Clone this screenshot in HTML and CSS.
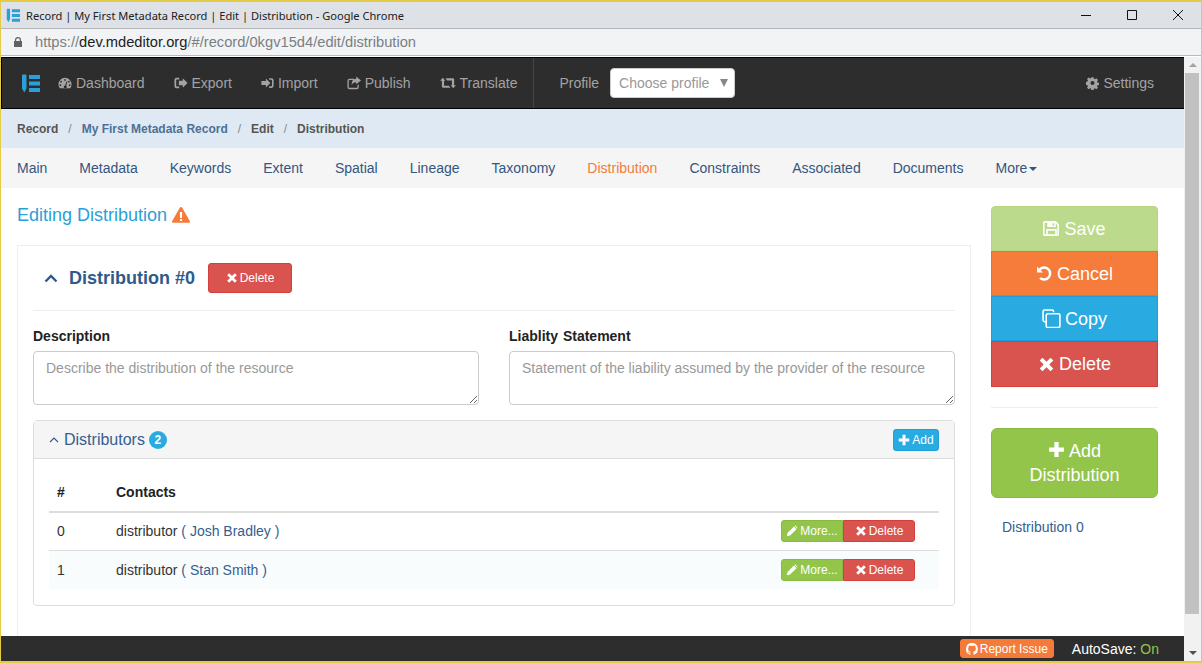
FILE: index.html
```html
<!DOCTYPE html>
<html lang="en">
<head>
  <meta charset="UTF-8" />
  <title>Record | My First Metadata Record | Edit | Distribution</title>
  <link rel="stylesheet" href="styles.css">
</head>
<body>
  <svg class="defs" width="0" height="0">
    <symbol id="i-logo" viewBox="0 0 19 19">
      <path d="M1 1.500A1 1 0 0 1 2 .5h2.500a1 1 0 0 1 1 1V14.500L3.250 18.500 1 14.500z" fill="#2b9fd8"/>
      <path d="M8 1h11v4H8zM8 7.500h11v4H8zM8 14h11v4H8z" fill="#2b9fd8"/>
    </symbol>
    <symbol id="i-x" viewBox="0 0 16 16">
      <path d="M4.2 1.600 8 5.400l3.800-3.800 2.600 2.600L10.600 8l3.800 3.800-2.600 2.600L8 10.600l-3.800 3.800-2.600-2.600L5.400 8 1.600 4.200z" fill="currentColor"/>
    </symbol>
    <symbol id="i-plus" viewBox="0 0 16 16">
      <path d="M6 1h4v5h5v4h-5v5H6v-5H1V6h5z" fill="currentColor"/>
    </symbol>
    <symbol id="i-pencil" viewBox="0 0 16 16">
      <path d="M1 15l1-4.500L10.500 2 14 5.500 5.500 14zM11.500 1l1-.3 2.800 2.800-.3 1L14.800 4.700 11.300 1.200z" fill="currentColor"/>
    </symbol>
    <symbol id="i-gauge" viewBox="0 0 16 16">
      <path fill-rule="evenodd" d="M8 2a7.500 7.500 0 0 0-7.500 7.500c0 1.700.5 3.200 1.500 4.500h12c1-1.300 1.500-2.800 1.500-4.500A7.500 7.500 0 0 0 8 2zM8 3.500a1 1 0 1 1 0 2 1 1 0 0 1 0-2zM3.500 5.500a1 1 0 1 1 0 2 1 1 0 0 1 0-2zM12.500 5.500a1 1 0 1 1 0 2 1 1 0 0 1 0-2zM2.700 9.500a1 1 0 1 1 0 2 1 1 0 0 1 0-2zM13.300 9.500a1 1 0 1 1 0 2 1 1 0 0 1 0-2zM10 6l.8.400-1.500 4.800a1.700 1.700 0 1 1-1.300-.3z" fill="currentColor"/>
    </symbol>
    <symbol id="i-export" viewBox="0 0 16 16">
      <path d="M6 2H3a2.500 2.500 0 0 0-2.500 2.500v7A2.500 2.500 0 0 0 3 14h3v-2H3a.5.5 0 0 1-.5-.5v-7A.5.5 0 0 1 3 4h3zM10 2.500 15.500 8 10 13.500V10.500H5.500v-5H10z" fill="currentColor"/>
    </symbol>
    <symbol id="i-import" viewBox="0 0 16 16">
      <path d="M10 2h3a2.500 2.500 0 0 1 2.500 2.500v7A2.500 2.500 0 0 1 13 14h-3v-2h3a.5.5 0 0 0 .5-.5v-7A.5.5 0 0 0 13 4h-3zM6 2.500 11.500 8 6 13.500V10.500H.5v-5H6z" fill="currentColor"/>
    </symbol>
    <symbol id="i-share" viewBox="0 0 16 16">
      <path d="M3 3h5v1.500H3a1 1 0 0 0-1 1v7a1 1 0 0 0 1 1h8a1 1 0 0 0 1-1V10h1.500v2.500A2.500 2.500 0 0 1 11 15H3a2.500 2.500 0 0 1-2.500-2.500v-7A2.500 2.500 0 0 1 3 3zM10.500 0.500 16 5l-5.500 4.500V7C7.500 7 6 8 5.500 10.500 5 6 7 3.200 10.500 3z" fill="currentColor"/>
    </symbol>
    <symbol id="i-retweet" viewBox="0 0 18 16">
      <path d="M0 5.500 3 2l3 3.500H4.500V11H10l1.800 2.500H3.500a1.500 1.500 0 0 1-1.500-1.500V5.500zM18 10.500 15 14l-3-3.500h1.500V5H8L6.200 2.500h8.300A1.500 1.500 0 0 1 16 4v6.500z" fill="currentColor"/>
    </symbol>
    <symbol id="i-cog" viewBox="0 0 16 16">
      <path fill-rule="evenodd" d="M6.700.8h2.600l.4 2 1.300.6 1.800-1.100 1.900 1.900-1.100 1.800.6 1.300 2 .4v2.600l-2 .4-.6 1.300 1.100 1.800-1.900 1.900-1.800-1.100-1.300.6-.4 2H6.700l-.4-2-1.300-.6-1.800 1.100-1.900-1.900 1.100-1.800-.6-1.300-2-.4V6.700l2-.4.600-1.300-1.100-1.800 1.900-1.900 1.800 1.100 1.300-.6zM8 5.500a2.500 2.500 0 1 0 0 5 2.500 2.500 0 0 0 0-5z" fill="currentColor"/>
    </symbol>
    <symbol id="i-save" viewBox="0 0 16 16">
      <path fill-rule="evenodd" d="M1.500 1H12l3 3v9.500a1.500 1.500 0 0 1-1.500 1.500h-12A1.500 1.500 0 0 1 0 13.500v-11A1.500 1.500 0 0 1 1.500 1zM1.500 2.500v11H3V8.500h10v5h.5V4.600L12 3v3.500H4V2.500zM4.500 10v3.500h7V10zM9 3v2.500h1.500V3z" fill="currentColor"/>
    </symbol>
    <symbol id="i-undo" viewBox="0 0 16 16">
      <path d="M1 1.500v5.500h5.500L4.400 4.900A4.500 4.500 0 1 1 4.700 11.500L3 13a6.800 6.800 0 1 0-.2-9.700z" fill="currentColor"/>
    </symbol>
    <symbol id="i-copy" viewBox="0 0 18 18">
      <path d="M11 3V2.500A1.500 1.500 0 0 0 9.500 1h-7A1.500 1.500 0 0 0 1 2.500v8A1.500 1.500 0 0 0 2.500 12H4M5.500 4.500h10A1.500 1.500 0 0 1 17 6v10a1.500 1.500 0 0 1-1.500 1.500h-10A1.500 1.500 0 0 1 4 16V6a1.500 1.500 0 0 1 1.500-1.500z" fill="none" stroke="currentColor" stroke-width="1.500"/>
    </symbol>
    <symbol id="i-github" viewBox="0 0 16 16">
      <path d="M8 0a8 8 0 0 0-2.500 15.600c.4.100.5-.2.500-.4v-1.400c-2.200.5-2.700-1-2.700-1-.4-.9-.9-1.200-.9-1.200-.7-.5.100-.5.100-.5.800.1 1.200.8 1.200.8.700 1.200 1.900.9 2.300.7.100-.5.300-.9.500-1.100-1.800-.2-3.600-.9-3.600-4 0-.9.300-1.600.8-2.100-.1-.2-.4-1 .1-2.100 0 0 .7-.2 2.200.8a7.600 7.600 0 0 1 4 0c1.500-1 2.200-.8 2.200-.8.400 1.100.2 1.900.1 2.100.5.600.8 1.300.8 2.100 0 3.100-1.900 3.700-3.700 3.900.3.300.6.800.6 1.500v2.200c0 .2.100.5.600.4A8 8 0 0 0 8 0z" fill="currentColor"/>
    </symbol>
  </svg>

  <div class="window">
    <div class="titlebar">
      <div class="title-left">
        <svg class="favicon"><use href="#i-logo"/></svg>
        <span>Record | My First Metadata Record | Edit | Distribution - Google Chrome</span>
      </div>
      <div class="win-btns">
        <span class="win-btn"><svg width="10" height="10"><path d="M0 5.500h10" stroke="#111" /></svg></span>
        <span class="win-btn"><svg width="10" height="10"><path d="M.5.500h9v9h-9z" stroke="#111" fill="none"/></svg></span>
        <span class="win-btn"><svg width="10" height="10"><path d="M0 0l10 10M10 0L0 10" stroke="#111"/></svg></span>
      </div>
    </div>
    <div class="addressbar">
      <svg class="lock" width="8" height="10" viewBox="0 0 8 10"><path fill-rule="evenodd" d="M1 4V3a3 3 0 0 1 6 0v1h1v6H0V4zM2.200 4h3.600V3a1.800 1.800 0 0 0-3.600 0z" fill="#5f6368"/></svg>
      <span class="url"><span class="url-scheme">https://</span><span class="url-host">dev.mdeditor.org</span>/#/record/0kgv15d4/edit/distribution</span>
    </div>

    <div class="viewport">
      <div class="page">
        <nav class="navbar">
          <svg class="brand"><use href="#i-logo"/></svg>
          <a class="nav-item"><svg class="ico"><use href="#i-gauge"/></svg>Dashboard</a>
          <a class="nav-item"><svg class="ico"><use href="#i-export"/></svg>Export</a>
          <a class="nav-item"><svg class="ico ico-narrow"><use href="#i-import"/></svg>Import</a>
          <a class="nav-item"><svg class="ico"><use href="#i-share"/></svg>Publish</a>
          <a class="nav-item"><svg class="ico ico-wide"><use href="#i-retweet"/></svg>Translate</a>
          <div class="nav-divider"></div>
          <span class="profile-label">Profile</span>
          <div class="profile-select"><span>Choose profile</span><span class="caret-down"></span></div>
          <a class="nav-item nav-settings"><svg class="ico ico-narrow"><use href="#i-cog"/></svg>Settings</a>
        </nav>

        <div class="breadcrumb">
          <span>Record</span><span class="sep">/</span>
          <a>My First Metadata Record</a><span class="sep">/</span>
          <span>Edit</span><span class="sep">/</span>
          <span>Distribution</span>
        </div>

        <div class="tabs">
          <a>Main</a>
          <a>Metadata</a>
          <a>Keywords</a>
          <a>Extent</a>
          <a>Spatial</a>
          <a>Lineage</a>
          <a>Taxonomy</a>
          <a class="active">Distribution</a>
          <a>Constraints</a>
          <a>Associated</a>
          <a>Documents</a>
          <a>More<span class="caret-small"></span></a>
        </div>

        <div class="content">
          <main class="main-col">
            <h3 class="page-title">Editing Distribution
              <svg class="warn" width="18" height="16" viewBox="0 0 18 16"><path fill-rule="evenodd" d="M9 0c.5 0 .9.300 1.100.600l7.700 13.500c.4.800-.1 1.700-1 1.700H1.200c-.9 0-1.400-.9-1-1.700L7.900.600C8.100.300 8.500 0 9 0zM7.800 5l.2 6h2l.2-6zM7.900 12v2h2.200v-2z" fill="#f47b3a"/></svg>
            </h3>

            <section class="card">
              <div class="card-head">
                <svg class="chev" width="14" height="9" viewBox="0 0 14 9"><path d="M1.500 7.500 7 2l5.500 5.500" fill="none" stroke="#2f5a8a" stroke-width="2.400"/></svg>
                <h4>Distribution #0</h4>
                <button class="btn btn-red btn-head"><svg class="ico-s"><use href="#i-x"/></svg>Delete</button>
              </div>

              <div class="fields">
                <div class="field">
                  <label>Description</label>
                  <textarea placeholder="Describe the distribution of the resource"></textarea>
                </div>
                <div class="field">
                  <label>Liablity Statement</label>
                  <textarea placeholder="Statement of the liability assumed by the provider of the resource"></textarea>
                </div>
              </div>

              <div class="panel">
                <div class="panel-head">
                  <div class="panel-title">
                    <svg width="10" height="6" viewBox="0 0 10 6"><path d="M1 5l4-4 4 4" fill="none" stroke="#2f5a8a" stroke-width="1.100"/></svg>
                    <span>Distributors</span>
                    <span class="badge">2</span>
                  </div>
                  <button class="btn btn-blue btn-add"><svg class="ico-s"><use href="#i-plus"/></svg>Add</button>
                </div>
                <div class="panel-body">
                  <table class="grid">
                    <thead>
                      <tr><th class="col-num">#</th><th>Contacts</th><th></th></tr>
                    </thead>
                    <tbody>
                      <tr>
                        <td>0</td>
                        <td>distributor <a>( Josh Bradley )</a></td>
                        <td class="col-act">
                          <div class="btn-group">
                            <button class="btn btn-green"><svg class="ico-s"><use href="#i-pencil"/></svg>More...</button>
                            <button class="btn btn-red"><svg class="ico-s"><use href="#i-x"/></svg>Delete</button>
                          </div>
                        </td>
                      </tr>
                      <tr class="odd">
                        <td>1</td>
                        <td>distributor <a>( Stan Smith )</a></td>
                        <td class="col-act">
                          <div class="btn-group">
                            <button class="btn btn-green"><svg class="ico-s"><use href="#i-pencil"/></svg>More...</button>
                            <button class="btn btn-red"><svg class="ico-s"><use href="#i-x"/></svg>Delete</button>
                          </div>
                        </td>
                      </tr>
                    </tbody>
                  </table>
                </div>
              </div>
            </section>
          </main>

          <aside class="side-col">
            <div class="side-stack">
              <button class="side-btn side-save"><svg class="ico-l"><use href="#i-save"/></svg>Save</button>
              <button class="side-btn side-cancel"><svg class="ico-l"><use href="#i-undo"/></svg>Cancel</button>
              <button class="side-btn side-copy"><svg class="ico-l ico-copy"><use href="#i-copy"/></svg>Copy</button>
              <button class="side-btn side-delete"><svg class="ico-l"><use href="#i-x"/></svg>Delete</button>
            </div>
            <hr class="side-rule" />
            <button class="side-add"><svg class="ico-l"><use href="#i-plus"/></svg>Add<br />Distribution</button>
            <a class="side-link">Distribution 0</a>
          </aside>
        </div>

        <footer class="statusbar">
          <button class="btn btn-orange"><svg class="ico-s"><use href="#i-github"/></svg>Report Issue</button>
          <span class="autosave">AutoSave: <b>On</b></span>
        </footer>
      </div>

      <div class="scrollbar">
        <span class="arrow-up"></span>
        <div class="scroll-track"><div class="scroll-thumb"></div></div>
        <span class="arrow-down"></span>
      </div>
    </div>
  </div>
</body>
</html>
```

FILE: styles.css
```css
* {
  box-sizing: border-box;
}
html, body {
  margin: 0;
  height: 663px;
  overflow: hidden;
}
body {
  font-family: "Liberation Sans", Arial, sans-serif;
  font-size: 14px;
  color: #333;
}
a {
  color: inherit;
  text-decoration: none;
}
.defs {
  display: block;
  height: 0;
}

/* browser chrome */
.window {
  display: flex;
  flex-direction: column;
  width: 1202px;
  height: 663px;
  border: solid #e3cb45;
  border-width: 2px 1px 2px 1px;
  background: #fff;
}
.titlebar {
  display: flex;
  justify-content: space-between;
  align-items: center;
  flex: none;
  height: 27px;
  padding-left: 5px;
  background: #dee1e6;
  border-bottom: 1px solid #b4b6ba;
  font-family: "Noto Sans", sans-serif;
  font-size: 11.1px;
  color: #222;
}
.title-left {
  display: flex;
  align-items: center;
  gap: 6px;
}
.favicon {
  width: 14px;
  height: 15px;
}
.win-btns {
  display: flex;
}
.win-btn {
  display: flex;
  align-items: center;
  justify-content: center;
  width: 46px;
  height: 26px;
}
.win-btn svg {
  display: block;
}
.addressbar {
  display: flex;
  align-items: center;
  flex: none;
  height: 27px;
  padding-left: 13px;
  gap: 13px;
  background: #f1f3f4;
  border-bottom: 1px solid #b8b9ba;
  font-size: 14.7px;
  color: #7b7f85;
}
.url-scheme {
  color: #7a7f85;
}
.url-host {
  color: #202124;
}
.viewport {
  display: flex;
  flex: 1;
  min-height: 0;
  border-top: 1px solid #fff;
}
.page {
  display: flex;
  flex-direction: column;
  flex: none;
  width: 1183px;
  min-height: 0;
}

/* scrollbar */
.scrollbar {
  display: flex;
  flex-direction: column;
  align-items: center;
  flex: 1;
  background: #f1f1f1;
}
.arrow-up, .arrow-down {
  flex: none;
  width: 0;
  height: 0;
  margin: 6px 0;
  border-left: 4px solid transparent;
  border-right: 4px solid transparent;
}
.arrow-up {
  border-bottom: 4px solid #a3a3a3;
}
.arrow-down {
  border-top: 4px solid #505050;
}
.scroll-track {
  flex: 1;
  width: 100%;
  padding-right: 1px;
}
.scroll-thumb {
  width: 14px;
  height: 541px;
  margin-left: 1px;
  background: #c1c1c1;
}

/* navbar */
.navbar {
  display: flex;
  align-items: center;
  flex: none;
  height: 52px;
  padding-left: 19px;
  background: #2d2d2d;
  border-top: 1px solid #000;
  border-bottom: 1px solid #000;
  border-left: 1px solid #000;
  color: #a3a3a3;
}
.brand {
  width: 19px;
  height: 19px;
  margin-right: 18px;
}
.nav-item {
  display: flex;
  align-items: center;
  gap: 4px;
  margin-right: 29px;
}
.ico {
  width: 14px;
  height: 14px;
}
.ico-narrow {
  width: 13px;
}
.ico-wide {
  width: 16px;
}
.nav-divider {
  align-self: stretch;
  width: 1px;
  margin-left: -13px;
  margin-right: 25px;
  background: #444;
}
.profile-label {
  margin-right: 11px;
}
.profile-select {
  display: flex;
  justify-content: space-between;
  align-items: center;
  width: 125px;
  height: 30px;
  padding: 0 6px 0 8px;
  background: #fff;
  border: 1px solid #ccc;
  border-radius: 4px;
  color: #999;
}
.caret-down {
  width: 0;
  height: 0;
  border-left: 4px solid transparent;
  border-right: 4px solid transparent;
  border-top: 8px solid #888;
}
.nav-settings {
  margin-left: auto;
  margin-right: 30px;
}

/* breadcrumb and tabs */
.breadcrumb {
  display: flex;
  align-items: center;
  flex: none;
  height: 39px;
  padding-left: 16px;
  background: #dfe9f3;
  font-size: 12px;
  font-weight: bold;
  color: #555;
}
.breadcrumb a {
  color: #4d7095;
}
.sep {
  margin: 0 10px;
  font-weight: normal;
  color: #888;
}
.tabs {
  display: flex;
  align-items: center;
  flex: none;
  gap: 32px;
  height: 40px;
  padding-left: 16px;
  background: #f5f5f5;
  color: #34567f;
}
.tabs .active {
  color: #f47b3a;
}
.caret-small {
  display: inline-block;
  margin-left: 2px;
  vertical-align: middle;
  border-left: 4px solid transparent;
  border-right: 4px solid transparent;
  border-top: 4px solid #34567f;
}

/* main content */
.content {
  display: flex;
  flex: 1;
  min-height: 0;
  overflow: hidden;
}
.main-col {
  flex: none;
  width: 970px;
  padding: 16px 0 0 16px;
}
.page-title {
  display: flex;
  align-items: center;
  gap: 5px;
  height: 22px;
  margin: 0 0 19px;
  font-size: 18px;
  font-weight: normal;
  color: #29a0d8;
}
.card {
  height: 420px;
  padding: 0 15px;
  border: 1px solid #eee;
}
.card-head {
  display: flex;
  align-items: center;
  height: 65px;
  padding: 0 11px;
  border-bottom: 1px solid #eee;
}
.card-head h4 {
  margin: 0 13px 0 11px;
  font-size: 18px;
  color: #2f5a8a;
}
.chev {
  display: block;
}
.fields {
  display: flex;
  gap: 30px;
  margin-top: 17px;
}
.field {
  flex: 1;
}
.field label {
  display: block;
  margin-bottom: 7px;
  font-weight: bold;
  color: #222;
  word-spacing: 1px;
}
.field textarea {
  display: block;
  width: 100%;
  height: 54px;
  padding: 6px 12px;
  border: 1px solid #ccc;
  border-radius: 4px;
  font: 14px/20px "Liberation Sans", Arial, sans-serif;
  color: #555;
}
.field textarea::placeholder {
  color: #999;
}

/* buttons */
.btn {
  display: inline-flex;
  align-items: center;
  justify-content: center;
  gap: 2px;
  padding: 0;
  border: 1px solid transparent;
  border-radius: 3px;
  font: 12px "Liberation Sans", Arial, sans-serif;
  color: #fff;
}
.ico-s {
  width: 12px;
  height: 12px;
}
.btn-red {
  background: #d9534f;
  border-color: #d43f3a;
}
.btn-blue {
  background: #29abe2;
  border-color: #1f9fd6;
}
.btn-green {
  background: #93c54b;
  border-color: #8ab943;
}
.btn-orange {
  height: 19px;
  padding: 0 5px;
  background: #f47b3a;
  border-color: #f47b3a;
}
.btn-head {
  width: 84px;
  height: 30px;
}
.btn-add {
  width: 46px;
  height: 22px;
}

/* distributors panel */
.panel {
  height: 186px;
  margin-top: 15px;
  border: 1px solid #ddd;
  border-radius: 4px;
}
.panel-head {
  display: flex;
  justify-content: space-between;
  align-items: center;
  height: 38px;
  padding: 0 15px;
  background: #f5f5f5;
  border-bottom: 1px solid #ddd;
}
.panel-title {
  display: flex;
  align-items: center;
  gap: 5px;
  font-size: 16px;
  color: #34608f;
}
.badge {
  display: flex;
  align-items: center;
  justify-content: center;
  width: 18px;
  height: 18px;
  margin-left: -1px;
  border-radius: 50%;
  background: #29abe2;
  font-size: 12px;
  font-weight: bold;
  color: #fff;
}
.panel-body {
  padding: 15px 15px 0;
}
.grid {
  width: 100%;
  border-collapse: collapse;
}
.grid th {
  height: 38px;
  padding: 0 8px 2px;
  border-bottom: 2px solid #ddd;
  text-align: left;
  color: #222;
}
.grid td {
  height: 39px;
  padding: 0 8px;
  border-top: 1px solid #ddd;
}
.grid thead + tbody tr:first-child td {
  border-top: 0;
  height: 38px;
}
.grid td a {
  color: #34608f;
}
.grid .odd td {
  background: #f9fcfd;
}
.col-num {
  width: 59px;
}
.grid .col-act {
  width: 166px;
  padding-right: 24px;
}
.btn-group {
  display: flex;
}
.btn-group .btn {
  height: 22px;
}
.btn-group .btn-green {
  width: 62px;
  border-radius: 3px 0 0 3px;
}
.btn-group .btn-red {
  width: 72px;
  border-radius: 0 3px 3px 0;
}

/* right column */
.side-col {
  flex: none;
  width: 167px;
  margin-left: 20px;
  padding-top: 18px;
}
.side-stack {
  display: flex;
  flex-direction: column;
}
.side-btn, .side-add {
  width: 100%;
  border: 1px solid transparent;
  font: 18px/24px "Liberation Sans", Arial, sans-serif;
  color: #fff;
}
.side-btn {
  display: flex;
  align-items: center;
  justify-content: center;
  gap: 4px;
  height: 45px;
  padding: 0;
}
.ico-l {
  width: 17px;
  height: 17px;
}
.ico-copy {
  width: 19px;
  height: 19px;
}
.side-save {
  background: #bbda8b;
  border-color: #b5d581;
  border-radius: 4px 4px 0 0;
}
.side-cancel {
  background: #f57c3b;
  border-color: #f36f27;
}
.side-copy {
  background: #29abe2;
  border-color: #1f9fd6;
}
.side-delete {
  height: 46px;
  background: #d9534f;
  border-color: #d43f3a;
}
.side-rule {
  height: 1px;
  margin: 20px 0;
  border: 0;
  background: #eee;
}
.side-add {
  height: 70px;
  background: #93c54b;
  border-color: #8ab943;
  border-radius: 6px;
}
.side-add .ico-l {
  margin-right: 4px;
  vertical-align: -1px;
}
.side-link {
  display: block;
  margin-top: 21px;
  padding-left: 11px;
  color: #34608f;
}

/* footer */
.statusbar {
  display: flex;
  justify-content: flex-end;
  align-items: center;
  flex: none;
  gap: 18px;
  height: 25px;
  padding-right: 25px;
  background: #2d2d2d;
}
.autosave {
  color: #fff;
}
.autosave b {
  font-weight: normal;
  color: #93c54b;
}
```
